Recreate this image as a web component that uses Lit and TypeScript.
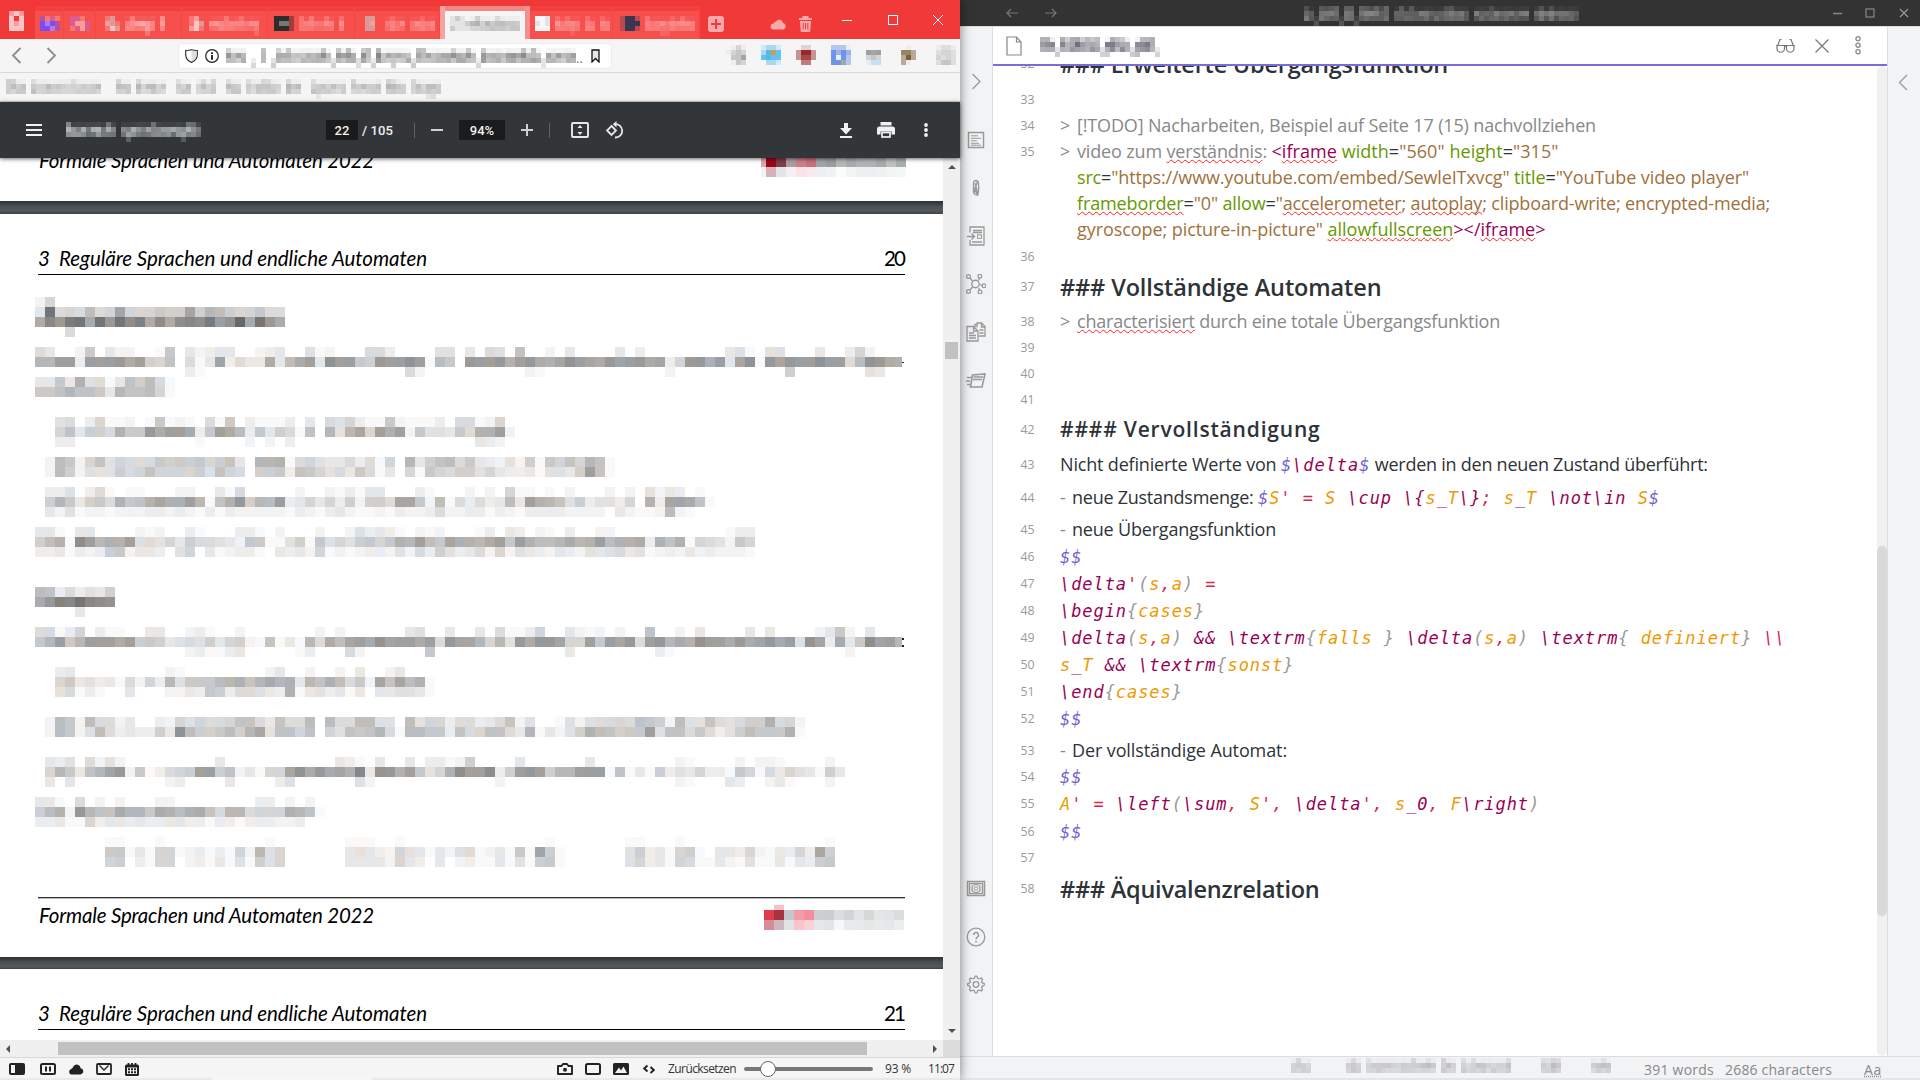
import { LitElement, html, svg, css, TemplateResult } from "lit";
import { customElement, property } from "lit/decorators.js";

/* ---------- mosaic helpers ---------- */

type Row = [number, number, string];

/** Levels are base-36 digits: 0 leaves the cell empty, higher digits are darker. */
const level = (c: string) => parseInt(c, 36) || 0;
const noise = (n: number) => {
  const s = Math.sin(n * 127.1 + 11.7) * 43758.5453;
  return s - Math.floor(s);
};

function grayCells(rows: Row[], size: number, oy: number, tint = 14) {
  return rows.map(([x, y, data]) =>
    [...data.replace(/ /g, "")].map((c, i) => {
      const n = level(c);
      if (!n) return svg``;
      const v = 255 - n * 6;
      const t = Math.round((noise(x + i * 13 + y * 7) - 0.5) * tint * Math.min(1, n / 5));
      const last = x + i * size + size > 902 ? 902 - x - i * size : size;
      return svg`<rect x=${x + i * size} y=${y - oy} width=${Math.max(1, last)} height=${size} fill=${`rgb(${v + t},${v},${v - t})`}></rect>`;
    })
  );
}

function paletteCells(rows: string[], palette: Record<string, string>, size = 5) {
  return rows.map((r, y) =>
    [...r].map((c, x) =>
      palette[c]
        ? svg`<rect x=${x * size} y=${y * size} width=${size} height=${size} fill=${palette[c]}></rect>`
        : svg``
    )
  );
}

/** Strip of text-like cells; the mask marks words (x = tall, o = low, g = descender, _ = underline, space = gap). */
function strip(mask: string, seed: number, color: string, strength: number) {
  const cells: TemplateResult[] = [];
  [...mask].forEach((c, i) => {
    if (c === " ") return;
    const rows =
      c === "x" ? [0.55, 0.9, 0.75, 0] : c === "g" ? [0.1, 0.85, 0.7, 0.4] : c === "_" ? [0, 0, 0.25, 0.4] : [0.12, 0.8, 0.65, 0];
    rows.forEach((a, y) => {
      const o = a * strength * (0.65 + noise(seed + i * 3 + y * 17) * 0.6);
      if (o > 0.02)
        cells.push(svg`<rect x=${i * 5} y=${y * 5} width="5" height="5" fill=${color} fill-opacity=${o.toFixed(2)}></rect>`);
    });
  });
  return html`<svg class="mosaic" width=${mask.length * 5} height="20" shape-rendering="crispEdges">${cells}</svg>`;
}

const icon = (w: number, h: number, body: unknown, cls = "") =>
  html`<svg class="ic ${cls}" width=${w} height=${h} viewBox="0 0 ${w} ${h}">${body}</svg>`;

/* ---------- page data ---------- */

const PAGE_ROWS: Row[] = [
  [35, 297, "27"],
  [35, 307, "4n676b67f7 77988f8cb8 77966"],
  [35, 317, "ekhmnenhnj lejejkjmgi penhe"],
  [65, 327, "6"],
  [35, 347, "6400290422 0019042344 0023400512 0006630000 55040650a0 0204000040 3000000004 5105500040 0372"],
  [35, 357, "ccgg3ggghe g87a0614f3 644e4beg4i gg98hggig1 b90hgghdgh edfigfehfg hef37hhdg4 fi1hfhggig g6bihed"],
  [185, 367, "31"], [405, 367, "62"], [525, 367, "21"], [665, 367, "2"], [785, 367, "8"], [865, 367, "54"],
  [35, 377, "4494d5614a8b61"],
  [35, 387, "99acaa94caab71"],
  [55, 417, "5603711201 9121061903 1113040657 3119211130 66127"],
  [55, 427, "7a4886d99h egge39geb3 94861a0c5c f7gdg29554 96ddg2"],
  [55, 437, "33"], [195, 437, "1"], [245, 437, "20203"], [475, 437, "432"],
  [45, 457, "2b927a5766 69898978a4 0ccd167544 636170c48a b694325281 97a7ca1"],
  [45, 467, "2b82555867 a777785a76 08893a9756 4961407197 6885743341 5548ga1"],
  [45, 487, "3350361011 0002200416 0000020021 3144000310 0020207110 1020002020 524301"],
  [45, 497, "8c94896d9a dfddgc1adh 8cbg347473 82886ff92b 163634b4gd ca58355370 d3ffea1"],
  [45, 507, "4251221222 3323213132 2222132134 2112132236 2233132133 3322220421 12b21"],
  [35, 527, "4410440000 2120031000 3310200020 0253431021 2000130430 2103002200 0000000001 33"],
  [35, 537, "8bd1jgcddg 5657486654 2991158195 758979dcgb 9fddceg9gd bbcecdgbdd e3dad17652 97"],
  [35, 547, "3341323892 4430570412 3310434271 2123325263 8534627254 3243254564 5123242322 21"],
  [35, 587, "ba363548"],
  [35, 597, "ehlknkji"],
  [75, 607, "4"],
  [35, 627, "6613703110 0440023100 2000000020 2000000450 0400406113 7004212020 0a00204000 0404000024 9204"],
  [35, 637, "9cg9cgggeg 8984565847 821a141c6e bfgeifggeg 6hffc7c5he hhf77g9gfh 6ghcedigge hefheg5if3 e49jfgc"],
  [185, 647, "231134"], [295, 647, "13"], [345, 647, "62"], [425, 647, "9"], [565, 647, "4"], [655, 647, "31"], [845, 647, "2"],
  [55, 667, "34"], [165, 667, "21"], [265, 667, "24"], [305, 667, "2002040024"],
  [55, 677, "7945341627 3c5999bcda cecd4cadb6 92fafbd1"],
  [55, 687, "5613100400 0224398366 543d145341 40445541"],
  [45, 717, "2b92b66240 032757667a a64a66b0b6 6bb550b577 366346a250 015256676a 982b55a656 88d672"],
  [45, 727, "2b925b6343 384ib889b8 cf5aa7a075 a9ac61bb99 3a67aa64c1 4258dba899 g5aa696358 b999d1"],
  [45, 757, "4350625200"], [215, 757, "4"], [335, 757, "43104004033128"], [515, 757, "4"], [585, 757, "4"], [675, 757, "21"], [735, 757, "2"], [755, 757, "221"], [825, 757, "2"],
  [45, 767, "7c94acfh29 13678gg8a2 4177fiehef dk4ihdg957 djggj38ghg 8ccggg1a14 1835473319 7164754184"],
  [45, 777, "404"], [165, 777, "23"], [225, 777, "4"], [275, 777, "35"], [355, 777, "52"], [495, 777, "2"], [675, 777, "21"], [725, 777, "43"], [765, 777, "241"], [825, 777, "2"],
  [35, 797, "4410602020 0022"], [255, 797, "33"], [285, 797, "202"],
  [35, 807, "8bd2hcaaec c9edbdea6c c6777dca1"],
  [35, 817, "3341173443 4334433133 1333223"],
  [105, 837, "11"], [155, 837, "1"], [265, 837, "1"], [345, 837, "111"], [395, 837, "1"], [545, 837, "1"], [625, 837, "11"], [675, 837, "1"], [825, 837, "1"],
  [105, 847, "9914177123 13172c57"], [345, 847, "4543275414 256124191f81"], [625, 847, "5834178104 43721437 3f8"],
  [105, 857, "7803177023 14151857"], [345, 857, "4444274304 023114151891"], [625, 857, "5734176114 21511414389"],
];

const LOGO_BOTTOM = [
  ["#e03c4e", "#a73340", "#c3c7ca", "#f49ba6", "#f38f9c", "#cdd0d3", "#cbced1", "#dcdddf", "#d2d5d8", "#e3e4e5", "#d4d9d8", "#e4e5e7", "#e2e3e4", "#d9dddf"],
  ["#d58d97", "#cbb9bd", "#e1e3e4", "#f8c5cb", "#f9d2d7", "#e6e7e8", "#e3e4e5", "#f6f7f7", "#e8eaeb", "#e8e9ea", "#e5e6e7", "#e8e9ea", "#e6e7e8", "#eceeed"],
];
const LOGO_TOP = [
  ["#a00418", "#7c4048", "#ad9da1", "#cb7f89", "#c86f7b", "#a1a5a8", "#999fa1", "#b5b7b9", "#a7abae", "#b0b4b7", "#afb3b6", "#a7abaf", "#bdbfc0", "#a9aeb1"],
  ["#d4b2b8", "#e4e4e6", "#f4f0f2", "#fae2e5", "#fae8ea", "#eef0f1", "#f0f2f3", "#fafbfa", "#f3f5f5", "#eff1f1", "#edf0f0", "#eff1f1", "#f3f4f4", "#f5f7f6"],
];

/* ---------- editor data ---------- */

type Seg = [string, string];
type Chunk = { w: number; kind?: string; segs: Seg[] };
type Line = { n: string; h: number; cls?: string; lines: Chunk[][] };

function math(src: string): Seg[] {
  const re = /\\[a-zA-Z]+|\\[{}]|\\\\|\$+|[(){}]|[=',;]+|[_&0-9]+|[A-Za-z]+| +/g;
  return (src.match(re) ?? []).map((t): Seg => {
    if (t === "\\\\") return ["tr", t];
    if (t[0] === "\\") return ["tm", t];
    if (t[0] === "$") return ["tp", t];
    if (/^[(){}]/.test(t)) return ["tg", t];
    if (/^[=',;]/.test(t)) return ["tr", t];
    if (/^[_&0-9]/.test(t)) return ["tm", t];
    return ["to", t];
  });
}
const mono = (src: string): Chunk => ({ w: src.length * 11.17, kind: "mono", segs: math(src) });
const plain = (w: number, t: string, c = ""): Chunk => ({ w, segs: [[c, t]] });
const R = String.raw;

const LINES: Line[] = [
  { n: "32", h: 35.5, cls: "h3", lines: [[plain(388, "### Erweiterte Übergangsfunktion")]] },
  { n: "33", h: 26, lines: [] },
  { n: "34", h: 26.5, lines: [[plain(17, "> ", "q"), plain(519, "[!TODO] Nacharbeiten, Beispiel auf Seite 17 (15) nachvollziehen", "q")]] },
  {
    n: "35", h: 104.5, lines: [
      [
        plain(17, "> ", "q"),
        { w: 194.5, segs: [["q", "video zum "], ["q sp", "verständnis"], ["q", ": "]] },
        { w: 287, segs: [["tm", "<"], ["tm sp", "iframe"], ["", " "], ["gr", "width"], ["", "="], ["st", '"560"'], ["", " "], ["gr", "height"], ["", "="], ["st", '"315"']] },
      ],
      [
        { w: 437, kind: "ind", segs: [["gr", "src"], ["", "="], ["st", '"https://www.youtube.com/embed/SewleITxvcg" ']] },
        { w: 235, segs: [["gr", "title"], ["", "="], ["st", '"YouTube video player"']] },
      ],
      [
        { w: 145.5, kind: "ind", segs: [["gr sp", "frameborder"], ["", "="], ["st", '"0" ']] },
        { w: 547.5, segs: [["gr", "allow"], ["", "="], ["st", '"'], ["st sp", "accelerometer"], ["st", "; "], ["st sp", "autoplay"], ["st", "; clipboard-write; encrypted-media;"]] },
      ],
      [
        { w: 250.5, kind: "ind", segs: [["st", 'gyroscope; picture-in-picture" ']] },
        { w: 218, segs: [["gr sp", "allowfullscreen"], ["tm", "></"], ["tm sp", "iframe"], ["tm", ">"]] },
      ],
    ],
  },
  { n: "36", h: 30.5, lines: [] },
  { n: "37", h: 35, cls: "h3", lines: [[plain(321.5, "### Vollständige Automaten")]] },
  { n: "38", h: 26, lines: [[plain(17, "> ", "q"), { w: 423, segs: [["q sp", "characterisiert"], ["q", " durch eine totale Übergangsfunktion"]] }]] },
  { n: "39", h: 26, lines: [] },
  { n: "40", h: 26, lines: [] },
  { n: "41", h: 29.7, lines: [] },
  { n: "42", h: 35.8, cls: "h4", lines: [[plain(260.5, "#### Vervollständigung")]] },
  { n: "43", h: 33, lines: [[plain(221, "Nicht definierte Werte von "), mono(R`$\delta$`), plain(337.5, " werden in den neuen Zustand überführt:")]] },
  { n: "44", h: 32, lines: [[plain(12, "- ", "q"), plain(186, "neue Zustandsmenge: "), mono(R`$S' = S \cup \{s_T\}; s_T \not\in S$`)]] },
  { n: "45", h: 26.5, lines: [[plain(12, "- ", "q"), plain(204, "neue Übergangsfunktion")]] },
  { n: "46", h: 27, lines: [[mono("$$")]] },
  { n: "47", h: 27, lines: [[mono(R`\delta'(s,a) =`)]] },
  { n: "48", h: 27, lines: [[mono(R`\begin{cases}`)]] },
  { n: "49", h: 27, lines: [[mono(R`\delta(s,a) && \textrm{falls } \delta(s,a) \textrm{ definiert} ` + "\\\\")]] },
  { n: "50", h: 27, lines: [[mono(R`s_T && \textrm{sonst}`)]] },
  { n: "51", h: 27.5, lines: [[mono(R`\end{cases}`)]] },
  { n: "52", h: 31.5, lines: [[mono("$$")]] },
  { n: "53", h: 26.5, lines: [[plain(12, "- ", "q"), plain(215, "Der vollständige Automat:")]] },
  { n: "54", h: 27, lines: [[mono("$$")]] },
  { n: "55", h: 27.5, lines: [[mono(R`A' = \left(\sum, S', \delta', s_0, F\right)`)]] },
  { n: "56", h: 26.5, lines: [[mono("$$")]] },
  { n: "57", h: 30.5, lines: [] },
  { n: "58", h: 35, cls: "h3", lines: [[plain(259.5, "### Äquivalenzrelation")]] },
];

/* ---------- text run set to a given measure ---------- */

@customElement("fit-text")
class FitText extends LitElement {
  @property({ type: Number }) w = 0;
  static styles = css`
    :host { display: inline-block; white-space: pre; flex: none; }
  `;
  render() {
    return html`<slot></slot>`;
  }
  updated() {
    this.style.letterSpacing = "0px";
    const len = (this.textContent ?? "").length;
    const natural = this.getBoundingClientRect().width;
    if (len && natural) this.style.letterSpacing = `${((this.w - natural) / len).toFixed(4)}px`;
  }
}

/* ---------- browser window ---------- */

@customElement("browser-window")
class BrowserWindow extends LitElement {
  static styles = css`
    :host { display: flex; flex-direction: column; width: 960px; height: 1080px; flex: none; background: #f5f5f5; position: relative; z-index: 2; box-shadow: 0 0 11px rgba(0,0,0,.5); font-family: "Open Sans", sans-serif; }
    svg { display: block; flex: none; }
    .tabs { height: 39px; background: linear-gradient(#f03838, #f03a39); display: flex; flex: none; }
    .tab { height: 33px; margin-top: 6px; background: linear-gradient(#f33f3e 0 5px, #f74f4c 5px); flex: none; display: flex; align-items: flex-start; padding-top: 10px; box-sizing: border-box; border-right: 1px solid #f44643; overflow: hidden; }
    .pin { width: 35px; padding: 11px 0 0 9px; box-sizing: border-box; flex: none; }
    .t1 { width: 29px; padding-left: 5px; } .t2 { width: 32px; padding-left: 6px; }
    .t3 { width: 86px; padding-left: 9px; } .t4 { width: 86px; padding-left: 7px; }
    .t5 { width: 87px; padding-left: 6px; } .t6 { width: 85px; padding-left: 10px; }
    .active { width: 90px; background: linear-gradient(#f58686 0 5px, #f5f5f5 5px); border-left: 5px solid #f7a1a1; border-right: 5px solid #f58f8f; padding-left: 5px; }
    .t8 { width: 83px; padding-left: 5px; } .t9 { width: 87px; padding-left: 7px; }
    .plus { margin: 16px 0 0 8px; } .cloud { margin: 18px 0 0 46px; } .trash { margin: 16px 0 0 13px; }
    .wc { margin: 14px 0 0 30px; }
    .nav { height: 33px; border-bottom: 1px solid #d8d8d8; display: flex; align-items: center; flex: none; box-sizing: content-box; }
    .back { margin-left: 11px; } .fwd { margin-left: 24px; }
    .url { height: 24px; width: 432px; margin-left: 122px; background: #fff; border-radius: 4px; box-shadow: 0 0 0 1px #ececec; display: flex; align-items: center; flex: none; }
    .url .mosaic { margin-top: 4px; }
    .shield { margin-left: 6px; } .info { margin: 0 7px 0 7px; } .bm { margin-left: 8px; }
    .dots3 { font-size: 13px; color: #777; width: 7px; margin-top: 5px; }
    .exts { display: flex; margin: -1px 0 0 115px; gap: 15px; }
    .marks { height: 29px; border-bottom: 1px solid #d5d5d5; flex: none; padding: 6px 0 0 6px; box-sizing: border-box; overflow: hidden; }
    .pdfbar { height: 56px; background: #323639; flex: none; display: flex; align-items: center; color: #f1f1f1; font: 500 13px Roboto, sans-serif; position: relative; z-index: 1; box-shadow: 0 1px 4px rgba(0,0,0,.6); }
    .burger { margin-left: 26px; } .ptitle { margin: 4px 0 0 24px; width: 140px; }
    .box { background: #191b1c; height: 20px; line-height: 21px; text-align: center; flex: none; }
    .bpage { width: 32px; margin-left: 120px; } .bzoom { width: 46px; margin-left: 16px; }
    .total { margin-left: 4px; width: 52px; white-space: pre; letter-spacing: .1px; }
    .sep { width: 1px; height: 15px; background: #5f6265; flex: none; }
    .minus { margin-left: 16px; } .add { margin: 0 16px; } .fitp { margin-left: 21px; } .rot { margin-left: 17px; }
    .dl { margin-left: 215px; } .pr { margin-left: 25px; } .more { margin-left: 29px; }
    .main { display: flex; height: 882px; flex: none; overflow: hidden; }
    .doc { width: 943px; display: flex; flex-direction: column; overflow: hidden; background: #fff; }
    .gapbar { height: 13px; flex: none; background: linear-gradient(#2d3134, #4e5254 6px, #54585a 10px, #3e4144); }
    .gapbar.b { height: 12px; }
    .foot1 { height: 43px; flex: none; display: flex; justify-content: space-between; padding: 0 35px 0 39px; overflow: hidden; }
    .foot1 .run { margin-top: -10px; }
    .head { height: 60px; flex: none; display: flex; align-items: flex-end; justify-content: space-between; margin: 0 38px 0 38px; border-bottom: 1px solid #000; padding: 0 1px 0 0; box-sizing: content-box; color: #000; }
    .run { font: italic 20.5px/24px Lato, sans-serif; color: #000; white-space: pre; }
    .head .run, .num { margin-bottom: 4px; }
    .num { font: 20.5px/24px Lato, sans-serif; }
    .bodyp { height: 622px; flex: none; }
    .footp { height: 60px; flex: none; margin: 0 35px 0 38px; display: flex; justify-content: space-between; position: relative; }
    .footp::before { content: ""; position: absolute; left: 0; right: 3px; top: 0; height: 1px; background: #333; box-shadow: 0 1px #bbb; }
    .footp .run { margin: 6px 0 0 1px; }
    .flogo { margin: 8px 4px 0 0; }
    .vs { width: 17px; background: #f0f0f0; display: flex; flex-direction: column; align-items: center; flex: none; }
    .vs .up { margin-top: 7px; } .vs .th { width: 13px; height: 17px; background: #c1c1c1; margin-top: 173px; } .vs .dn { margin-top: 670px; }
    .hs { height: 17px; background: #f0f0f0; display: flex; align-items: center; flex: none; }
    .hs .l { margin-left: 6px; } .hs .th { width: 809px; height: 13px; background: #c1c1c1; margin-left: 48px; } .hs .r { margin-left: 66px; }
    .hs .corner { width: 17px; height: 17px; background: #dcdcdc; margin-left: 6px; }
    .status { height: 21px; border-top: 1px solid #d8d8d8; box-sizing: border-box; display: flex; align-items: center; flex: none; background: #f5f5f5; padding-top: 2px; font-size: 12px; color: #333; }
    .strip { height: 2px; background: linear-gradient(90deg, #e9e9e9 212px, #f7f7f7 212px 372px, #e9e9e9 372px); flex: none; }
    .s1 { margin-left: 9px; } .s2 { margin-left: 15px; } .s3 { margin-left: 12px; } .s4 { margin-left: 12px; } .s5 { margin-left: 13px; }
    .s6 { margin-left: 418px; } .s7 { margin-left: 12px; } .s8 { margin-left: 12px; } .s9 { margin: 0 13px 0 14px; }
    .sl { margin-left: 8px; } .pc { margin-left: 12px; margin-top: -2px; } .tm { margin-left: 17px; margin-top: -2px; }
    .rs { margin-top: -2px; }
  `;

  exts() {
    const P: Record<string, string> = {
      a: "#ededed", b: "#d4d4d4", c: "#c6c6c6", d: "#a6a6a6", e: "#a8d9ee", f: "#5bb8e0", g: "#c9a052", h: "#63c2f7", i: "#cfeafa",
      j: "#dfd2d3", k: "#c89397", l: "#952829", m: "#a94646", n: "#c07d80", o: "#b3c8f0", p: "#6d95e8", q: "#e9effa", r: "#9ab4ea",
      s: "#9f9f9f", t: "#c4dff9", u: "#9b8366", v: "#7d5e3a", w: "#b8a999", x: "#dedede",
    };
    const sets = [
      [" aba", "abcb", " ccd", " acb"], ["ieei", "efgh", "hfhh", " eei"], [" jj ", "kllk", "kmmk", " nn "], ["oooa", "prpr", "pqpo", "ppdo"],
      ["    ", "sds ", "bcb ", "att "], [" a  ", "uuw ", "wvw ", "wa  "], ["axxa", "xbbx", "bxbx", "xccx"],
    ];
    return sets.map((s) => html`<svg width="20" height="20" shape-rendering="crispEdges">${paletteCells(s, P)}</svg>`);
  }

  tabIcon(rows: string[]) {
    const P: Record<string, string> = {
      w: "#fbc5c5", p: "#f99d9c", q: "#f87572", v: "#7d4cf0", u: "#b07ae8", x: "#b0559c", k: "#2d2d2d", g: "#787878", m: "#9f3d3c",
      l: "#d99a9a", W: "#f7f7f7", G: "#e2e2e2", n: "#3a3550", o: "#b84a50", c: "#cccccc", d: "#e4e4e4", z: "#dc5c8c",
    };
    return html`<svg width="20" height="20" shape-rendering="crispEdges">${paletteCells(rows, P)}</svg>`;
  }

  render() {
    const W = "#ffffff";
    return html`
      <div class="tabs">
        <div class="pin">${this.tabIcon(["pwp", "w w", "wpw", "www"])}</div>
        <div class="tab t1">${this.tabIcon(["xqzq", "vuvx", "vvux", "    "])}</div>
        <div class="tab t2">${this.tabIcon(["zzq ", "zppz", "qzpz", "    "])}</div>
        <div class="tab t3">${this.tabIcon(["ql  ", "plq ", "qwl ", "    "])}${strip("oxoogo x", 3, W, 0.5)}</div>
        <div class="tab t4">${this.tabIcon(["qp  ", "qwl ", "pwq ", "    "])}${strip("oooxooxoog", 9, W, 0.4)}</div>
        <div class="tab t5">${this.tabIcon(["kkkm", "kggm", "kkkm", "    "])}${strip(" xoxooxo x", 15, W, 0.35)}</div>
        <div class="tab t6">${this.tabIcon(["ll  ", "lp  ", "ll  ", "    "])}${strip("oxoo ooxoo", 22, W, 0.35)}</div>
        <div class="tab active">${this.tabIcon(["dcd ", "dddc", "cddd", "    "])}${strip("oxoooxoooo", 31, "#777", 0.5)}</div>
        <div class="tab t8">${this.tabIcon(["WWG ", "GWG ", "WWW ", "    "])}${strip("xoxgo xo xo", 40, W, 0.35)}</div>
        <div class="tab t9">${this.tabIcon(["onno", "onnn", "onno", "    "])}${strip(" xooggxoxoo", 50, W, 0.35)}</div>
        ${icon(16, 16, svg`<rect width="16" height="16" rx="3" fill="#f9a9a9"></rect><path d="M8 3v10M3 8h10" stroke="#f03a39" stroke-width="2"></path>`, "plus")}
        ${icon(16, 12, svg`<path d="M3.500 11.500a3 3 0 0 1 .3-6A2.500 2.500 0 0 1 6 3.600A3.800 3.800 0 0 1 13 5a3.300 3.300 0 0 1 0 6.500z" fill="#f9a9a9"></path>`, "cloud")}
        ${icon(13, 17, svg`<path d="M0 3h13M4.500 2.500V1h4v1.500" stroke="#f9a9a9" stroke-width="2" fill="none"></path><path d="M1 5h11l-.8 11H1.800z" fill="#f9a9a9"></path><path d="M4.200 7v6.500M6.500 7v6.500M8.800 7v6.500" stroke="#f03a39"></path>`, "trash")}
        ${icon(102, 12, svg`<path d="M0 6.500h10" stroke="#fff" stroke-width="1"></path><rect x="46.500" y="1.500" width="9" height="9" fill="none" stroke="#fff"></rect><path d="M91 1l10 10M101 1l-10 10" stroke="#fff"></path>`, "wc")}
      </div>
      <div class="nav">
        ${icon(11, 17, svg`<path d="M9.500 1L2 8.500L9.500 16" stroke="#8c8c8c" stroke-width="1.800" fill="none"></path>`, "back")}
        ${icon(11, 17, svg`<path d="M1.500 1L9 8.500L1.500 16" stroke="#8c8c8c" stroke-width="1.800" fill="none"></path>`, "fwd")}
        <div class="url">
          ${icon(13, 14, svg`<path d="M.7 1.500Q4 1.500 6.500.7Q9 1.500 12.300 1.500V6Q12 11 6.500 13.400Q1 11 .7 6z" fill="#fff" stroke="#333" stroke-width="1.200"></path><path d="M6.500 1.500Q9 2 11.600 2V6Q11.300 10.500 6.500 12.700z" fill="#ddd"></path>`, "shield")}
          ${icon(14, 14, svg`<circle cx="7" cy="7" r="6.300" fill="none" stroke="#222" stroke-width="1.200"></circle><path d="M7 6v4.800M7 3.200v1.800" stroke="#222" stroke-width="1.900"></path>`, "info")}
          ${strip("xooo _ x _xoxooooooxo_xoxo_xx_xoogooo_xxoooooxooxo_xoooooooxoxo_oooooo", 5, "#555", 0.62)}
          <span class="dots3">..</span>
          ${icon(9, 14, svg`<path d="M1 1h7v12l-3.500-3.500L1 13z" fill="#e6e6e6" stroke="#111" stroke-width="1.300"></path>`, "bm")}
        </div>
        <div class="exts">${this.exts()}</div>
      </div>
      <div class="marks">${strip("xxoo xoooooooxooooo   xoo xooooo  xoo oxox  xoo xooxxoo xoo  xgooooo xooooo xxoo xooggo", 8, "#777", 0.45)}</div>
      <div class="pdfbar">
        ${icon(16, 12, svg`<path d="M0 1h16M0 6h16M0 11h16" stroke="#f1f1f1" stroke-width="2"></path>`, "burger")}
        <div class="ptitle">${strip("xoooooooxo ogooooxooooogxxo", 77, "#dfe4e6", 0.72)}</div>
        <div class="box bpage">22</div>
        <div class="total">/ 105</div>
        <div class="sep"></div>
        ${icon(12, 12, svg`<path d="M0 6h12" stroke="#d0d0d0" stroke-width="2"></path>`, "minus")}
        <div class="box bzoom">94%</div>
        ${icon(12, 12, svg`<path d="M0 6h12M6 0v12" stroke="#d0d0d0" stroke-width="2"></path>`, "add")}
        <div class="sep"></div>
        ${icon(18, 16, svg`<rect x="1" y="1" width="16" height="14" rx="1" fill="none" stroke="#e8e8e8" stroke-width="1.900"></rect><path d="M9 3l2.500 3h-5zM9 13l2.500-3h-5z" fill="#e8e8e8"></path>`, "fitp")}
        ${icon(19, 18, svg`<path d="M5.500 5L10 9.500L5.500 14L1 9.500z" fill="none" stroke="#e8e8e8" stroke-width="1.800"></path><path d="M8.500 3.200A6.700 6.700 0 1 1 9 16.500" fill="none" stroke="#e8e8e8" stroke-width="1.800"></path><path d="M10.500 0L6.800 3.300L10.500 6.600z" fill="#e8e8e8"></path>`, "rot")}
        ${icon(12, 15, svg`<path d="M4 0h4v5h4l-6 6.500L0 5h4z" fill="#f1f1f1"></path><path d="M0 14h12" stroke="#f1f1f1" stroke-width="2"></path>`, "dl")}
        ${icon(18, 16, svg`<path d="M3.500 0h11v3.500h-11z" fill="#f1f1f1"></path><path d="M2.500 4.500h13A2.500 2.500 0 0 1 18 7v5.500h-3.500V9.500h-11v3H0V7a2.500 2.500 0 0 1 2.500-2.500z" fill="#f1f1f1"></path><rect x="5" y="10.500" width="8" height="4.500" fill="none" stroke="#f1f1f1" stroke-width="1.700"></rect>`, "pr")}
        ${icon(4, 14, svg`<circle cx="2" cy="2" r="1.900" fill="#f1f1f1"></circle><circle cx="2" cy="7" r="1.900" fill="#f1f1f1"></circle><circle cx="2" cy="12" r="1.900" fill="#f1f1f1"></circle>`, "more")}
      </div>
      <div class="main">
        <div class="doc">
          <div class="foot1"><fit-text class="run" .w=${335}>Formale Sprachen und Automaten 2022</fit-text>${this.topLogo()}</div>
          <div class="gapbar"></div>
          <div class="head"><div><fit-text class="run" .w=${21}>3 </fit-text><fit-text class="run" .w=${368}>Reguläre Sprachen und endliche Automaten</fit-text></div><fit-text class="num" .w=${20}>20</fit-text></div>
          <svg class="bodyp" width="943" height="622" shape-rendering="crispEdges">
            ${grayCells(PAGE_ROWS, 10, 275)}
            <rect x="902" y="87" width="2" height="1" fill="#123"></rect>
            <rect x="902" y="363" width="2" height="2" fill="#123"></rect>
            <rect x="902" y="370" width="2" height="2" fill="#123"></rect>
          </svg>
          <div class="footp"><fit-text class="run" .w=${335}>Formale Sprachen und Automaten 2022</fit-text>${this.bottomLogo()}</div>
          <div class="gapbar b"></div>
          <div class="head"><div><fit-text class="run" .w=${21}>3 </fit-text><fit-text class="run" .w=${368}>Reguläre Sprachen und endliche Automaten</fit-text></div><fit-text class="num" .w=${20}>21</fit-text></div>
        </div>
        <div class="vs">
          ${icon(8, 4, svg`<path d="M0 4l4-4l4 4z" fill="#505050"></path>`, "up")}
          <div class="th"></div>
          ${icon(8, 4, svg`<path d="M0 0l4 4l4-4z" fill="#505050"></path>`, "dn")}
        </div>
      </div>
      <div class="hs">
        ${icon(4, 8, svg`<path d="M4 0L0 4l4 4z" fill="#505050"></path>`, "l")}
        <div class="th"></div>
        ${icon(4, 8, svg`<path d="M0 0l4 4l-4 4z" fill="#505050"></path>`, "r")}
        <div class="corner"></div>
      </div>
      <div class="status">
        ${icon(16, 12, svg`<rect width="16" height="12" rx="2" fill="#222"></rect><rect x="2" y="2" width="4" height="8" fill="#f5f5f5"></rect>`, "s1")}
        ${icon(16, 12, svg`<rect x="1" y="1" width="14" height="10" rx="1.500" fill="none" stroke="#222" stroke-width="2"></rect><path d="M6 3.500v5M10 3.500v5" stroke="#222" stroke-width="2"></path>`, "s2")}
        ${icon(16, 11, svg`<path d="M3 10.500a2.900 2.900 0 0 1 .2-5.500Q5 4 5.500 2.200A4 4 0 0 1 12.700 4.200a3.200 3.200 0 0 1 0 6.300z" fill="#222"></path>`, "s3")}
        ${icon(16, 12, svg`<rect x="1" y="1" width="14" height="10" rx="1" fill="none" stroke="#222" stroke-width="1.800"></rect><path d="M3.500 2.500L8 7l4.500-4.500" fill="none" stroke="#222" stroke-width="1.300"></path>`, "s4")}
        ${icon(14, 13, svg`<rect y="1.500" width="14" height="11.500" rx="1.500" fill="#222"></rect><path d="M3.500 0v2M7 0v2M10.500 0v2" stroke="#222" stroke-width="1.800"></path><rect x="2" y="4.500" width="10" height="6.500" fill="#f5f5f5"></rect><path d="M3 6.300h8M3 9.300h8" stroke="#222" stroke-width="2" stroke-dasharray="2 1"></path>`, "s5")}
        ${icon(16, 12, svg`<path d="M1 3h3.500L6 1h4l1.500 2H15v8H1z" fill="none" stroke="#222" stroke-width="1.900" stroke-linejoin="round"></path><circle cx="8" cy="6.800" r="2" fill="#222"></circle>`, "s6")}
        ${icon(16, 12, svg`<rect x="1" y="1" width="14" height="10" rx="1.500" fill="none" stroke="#222" stroke-width="2"></rect>`, "s7")}
        ${icon(16, 12, svg`<rect width="16" height="12" rx="1.500" fill="#222"></rect><path d="M2 10L6 4.500L8 7.500L10.500 3.500L14 10z" fill="#f5f5f5"></path>`, "s8")}
        ${icon(12, 10, svg`<path d="M4.500 1.500L1.200 4.500L4.500 7.500M7.500 3L10.800 6L7.500 9" fill="none" stroke="#222" stroke-width="1.900"></path>`, "s9")}
        <fit-text class="rs" .w=${68}>Zurücksetzen</fit-text>
        ${icon(129, 18, svg`<rect y="7" width="129" height="4" rx="2" fill="#777"></rect><circle cx="24" cy="9" r="7.500" fill="#fff" stroke="#666"></circle>`, "sl")}
        <fit-text class="pc" .w=${26}>93 %</fit-text>
        <fit-text class="tm" .w=${26}>11:07</fit-text>
      </div>
      <div class="strip"></div>
    `;
  }

  bottomLogo() {
    return html`<svg class="flogo" width="140" height="25" shape-rendering="crispEdges">
      <rect x="10" width="10" height="5" fill="#f9c0c8"></rect>
      ${LOGO_BOTTOM.map((r, y) => r.map((c, x) => svg`<rect x=${x * 10} y=${5 + y * 10} width="10" height="10" fill=${c}></rect>`))}
    </svg>`;
  }

  topLogo() {
    return html`<svg width="147" height="19" shape-rendering="crispEdges">
      <rect width="5" height="9" fill="#dba6ae"></rect><rect y="9" width="5" height="10" fill="#fbeff0"></rect>
      ${LOGO_TOP.map((r, y) => r.map((c, x) => svg`<rect x=${5 + x * 10} y=${-1 + y * 10} width="10" height="10" fill=${c}></rect>`))}
    </svg>`;
  }
}

/* ---------- notes window ---------- */

@customElement("notes-window")
class NotesWindow extends LitElement {
  static styles = css`
    :host { display: flex; flex-direction: column; width: 960px; height: 1080px; flex: none; background: #f2f3f5; font-family: "Open Sans", "Noto Sans", sans-serif; color: #2e3338; }
    svg { display: block; flex: none; }
    .title { height: 26px; background: #333; flex: none; display: flex; align-items: center; }
    .arr { margin-left: 46px; } .tmos { margin: 5px 0 0 247px; } .twin { margin-left: 253px; }
    .mid { height: 1030px; flex: none; display: flex; border-top: 1px solid #ddd; box-sizing: border-box; }
    .ribbon { width: 32px; border-right: 1px solid #ddd; flex: none; display: flex; flex-direction: column; align-items: center; }
    .r0 { margin-top: 46px; } .r1 { margin-top: 41px; } .r2 { margin-top: 29px; } .r3 { margin-top: 28px; } .r4 { margin-top: 28px; } .r5 { margin-top: 28px; } .r6 { margin-top: 30px; }
    .r7 { margin-top: 490px; } .r8 { margin-top: 29px; } .r9 { margin-top: 28px; }
    .pane { width: 894px; flex: none; background: #fff; display: flex; flex-direction: column; }
    .head { height: 37px; border-bottom: 2px solid #7b6cd9; flex: none; display: flex; align-items: center; }
    .file { margin-left: 13px; } .fmos { margin: 3px 0 0 18px; width: 125px; } .glass { margin-left: 611px; } .x { margin-left: 20px; } .dots { margin-left: 26px; }
    .ed { flex: 1; display: flex; min-height: 0; overflow: hidden; }
    .code { width: 884px; margin-top: -16px; }
    .row { display: flex; }
    .gut { width: 41.5px; margin-right: 25.5px; text-align: right; font-size: 12.3px; line-height: 27px; color: #999; flex: none; }
    .ln { height: 26px; line-height: 26px; font-size: 18px; display: flex; white-space: pre; }
    .h3 .ln { font-size: 23.5px; font-weight: 600; padding-top: 1px; }
    .h4 .ln { font-size: 21px; font-weight: 600; }
    .mono { font-family: "DejaVu Sans Mono", monospace; font-style: italic; font-size: 17px; margin-top: 1px; }
    .ind { margin-left: 17px; }
    .q { color: #888; } .tm { color: #905; } .tp { color: #705dcf; } .tg { color: #999; } .tr { color: #d9264d; } .to { color: #e90; }
    .gr { color: #690; } .st { color: #a0713c; }
    .sp { text-decoration: underline wavy #f22 1px; text-underline-offset: 1px; text-decoration-skip-ink: none; }
    .sb { width: 10px; background: #f0f0f0; border-radius: 5px; flex: none; }
    .sb div { height: 370px; margin-top: 480px; background: #d9d9d9; border-radius: 5px; }
    .side { width: 32px; border-left: 1px solid #ddd; flex: none; }
    .side svg { margin: 47px 0 0 10px; }
    .status { height: 22px; border-top: 1px solid #ddd; box-sizing: border-box; display: flex; align-items: center; font-size: 14px; color: #888; flex: none; }
    .smos { margin: 0 0 0 331px; } .w1 { margin-left: 33px; } .w2 { margin-left: 11px; } .w3 { margin-left: 32px; text-decoration: underline dotted; }
    .w1, .w2, .w3 { margin-top: 4px; }
    .strip { height: 2px; background: #e4e5e6; flex: none; }
  `;

  chunk(c: Chunk) {
    return html`<fit-text class=${c.kind ?? ""} .w=${c.w}>${c.segs.map(([k, t]) => html`<span class=${k}>${t}</span>`)}</fit-text>`;
  }

  line(l: Line) {
    return html`<div class="row ${l.cls ?? ""}" style="height:${l.h}px"><div class="gut">${l.n}</div><div>${l.lines.map(
      (cs) => html`<div class="ln">${cs.map((c) => this.chunk(c))}</div>`
    )}</div></div>`;
  }

  render() {
    const g = "#999";
    const s = (d: string) => svg`<path d=${d} fill="none" stroke=${g} stroke-width="1.300"></path>`;
    const teeth = Array.from({ length: 33 }, (_, i) => {
      const r = i % 4 === 0 || i % 4 === 3 ? 8.4 : 6.3;
      const a = ((i + 0.5) * Math.PI) / 16;
      return `${i ? "L" : "M"}${(9 + r * Math.cos(a)).toFixed(1)} ${(9.5 + r * Math.sin(a)).toFixed(1)}`;
    }).join("");
    return html`
      <div class="title">
        ${icon(51, 10, svg`<path d="M12 5H1M5 1L1 5l4 4M39 5h11M46 1l4 4l-4 4" fill="none" stroke="#777" stroke-width="1.200"></path>`, "arr")}
        <div class="tmos">${strip("xo_xxxx_xx_xxxxxx oxoxooooooxxooo oooxooooooo oxoxooooo", 61, "#c8c8c8", 0.5)}</div>
        ${icon(77, 12, svg`<path d="M1 6.500h9" stroke="#888" stroke-width="1.500"></path><rect x="34" y="2" width="8" height="8" fill="none" stroke="#888" stroke-width="1.200"></rect><path d="M68 2l8 8M76 2l-8 8" stroke="#999" stroke-width="1.200"></path>`, "twin")}
      </div>
      <div class="mid">
        <div class="ribbon">
          ${icon(18, 17, s("M5.500 1l7.500 7.500L5.500 16"), "r0")}
          ${icon(18, 18, svg`<rect x="1.500" y="1.500" width="15" height="15" fill="none" stroke=${g} stroke-width="1.500"></rect><path d="M4 4.800h7M4 7.300h10M4 9.800h6M4 12.300h8M4 14.200h10" stroke=${g} stroke-width="1"></path>`, "r1")}
          ${icon(18, 20, s("M6.500 5a2.500 2.500 0 1 1 5 0v9a2.500 3.500 0 0 1-5-2zM8 5l3 12M10.500 3L7 15M12 9l-1.500 9M6.500 8.500l4 9"), "r2")}
          ${icon(18, 20, svg`${s("M3 6.500V1h14v18H3v-5M6 4.500h9M6 6.500h9M5 16h10M0 10.500h7M4.500 7.500l3 3l-3 3")}<rect x="10.500" y="8.800" width="4" height="3.500" fill="none" stroke=${g}></rect>`, "r3")}
          ${icon(20, 20, svg`${s("M6.500 7L4 4M12.500 6.500L13.500 4M6.500 13L4 16M12.500 14l1.500 3M14 10.500l3 1")}<circle cx="9.500" cy="10" r="3.700" fill="none" stroke=${g} stroke-width="1.400"></circle>${[[2.5, 2.5], [13.8, 2.3], [2.5, 17.5], [14, 18], [18, 11.8]].map(([x, y]) => svg`<circle cx=${x} cy=${y} r="1.900" fill="none" stroke=${g} stroke-width="1.200"></circle>`)}`, "r4")}
          ${icon(20, 20, s("M11 5.500V1h4.500l3.500 3.500V14h-7M9 5V2.500h2M15.500 1v4H19M13.500 8h4M13.500 11h4M1 4.500h6.500L12 9v10H1zM7.500 4.500V9H12M3 11h5M3 13.500h7M3 16h7"), "r5")}
          ${icon(20, 18, svg`<path d="M6.500 3L19 2L16 15H4.500z" fill="none" stroke=${g} stroke-width="1.600"></path>${s("M7.500 5h9.500M7 7.500h9M1 5.500h4M0 9h4M1 12.500h3")}`, "r6")}
          ${icon(20, 18, svg`<rect x="1.500" y="1.500" width="17" height="14" fill="#ddd" stroke=${g} stroke-width="1.500"></rect><rect x="3.500" y="3.500" width="13" height="10" fill="none" stroke=${g}></rect><circle cx="10" cy="8.500" r="4" fill="#eee" stroke=${g} stroke-width="1.200"></circle><circle cx="10" cy="8.500" r="1.800" fill="none" stroke=${g}></circle>`, "r7")}
          ${icon(20, 20, svg`<circle cx="10" cy="10" r="8.800" fill="none" stroke=${g} stroke-width="1.300"></circle><path d="M7.500 8a2.500 2.500 0 1 1 3.800 2.100Q10.100 10.800 10.100 12.200M10 13.800v1.600" fill="none" stroke=${g} stroke-width="1.500"></path>`, "r8")}
          ${icon(18, 19, svg`${s(teeth)}<circle cx="9" cy="9.500" r="2.800" fill="none" stroke=${g} stroke-width="1.300"></circle>`, "r9")}
        </div>
        <div class="pane">
          <div class="head">
            ${icon(16, 20, svg`<path d="M1 1h9.500L15 6v13H1zM10.500 1v5H15" fill="none" stroke="#888" stroke-width="1.200"></path>`, "file")}
            <div class="fmos">${strip("xxo_xxxxxxxx_gxxxo_gxxx_", 91, "#445", 0.68)}</div>
            ${icon(19, 15, svg`<path d="M1.500 8L4 1.500h1.500M17.500 8L15 1.500h-1.500M.5 7.500h18M8.500 8.500q1-.8 2 0" fill="none" stroke="#777" stroke-width="1.200"></path><path d="M1 7.500h7.500v3a3.700 3.700 0 0 1-7.500 0zM10.500 7.500H18v3a3.700 3.700 0 0 1-7.500 0z" fill="none" stroke="#777" stroke-width="1.200"></path>`, "glass")}
            ${icon(14, 14, svg`<path d="M.5.5l13 13M13.500.5l-13 13" stroke="#777" stroke-width="1.200"></path>`, "x")}
            ${icon(6, 19, [2.8, 9.3, 15.8].map((y) => svg`<circle cx="3" cy=${y} r="2.100" fill="none" stroke="#888" stroke-width="1.300"></circle>`), "dots")}
          </div>
          <div class="ed">
            <div class="code">${LINES.map((l) => this.line(l))}</div>
            <div class="sb"><div></div></div>
          </div>
        </div>
        <div class="side">${icon(10, 17, s("M9 1L1.500 8.500L9 16"))}</div>
      </div>
      <div class="status">
        <div class="smos">${strip("oxoo       oxo xooooooooxooxo xoo xoxoooooox      xxxx      ooxo", 19, "#888", 0.45)}</div>
        <fit-text class="w1" .w=${70}>391 words</fit-text>
        <fit-text class="w2" .w=${107}>2686 characters</fit-text>
        <fit-text class="w3" .w=${18}>Aa</fit-text>
      </div>
      <div class="strip"></div>
    `;
  }
}

@customElement("app-root")
class AppRoot extends LitElement {
  static styles = css`
    :host { display: flex; width: 1920px; height: 1080px; overflow: hidden; }
  `;
  render() {
    return html`<browser-window></browser-window><notes-window></notes-window>`;
  }
}
